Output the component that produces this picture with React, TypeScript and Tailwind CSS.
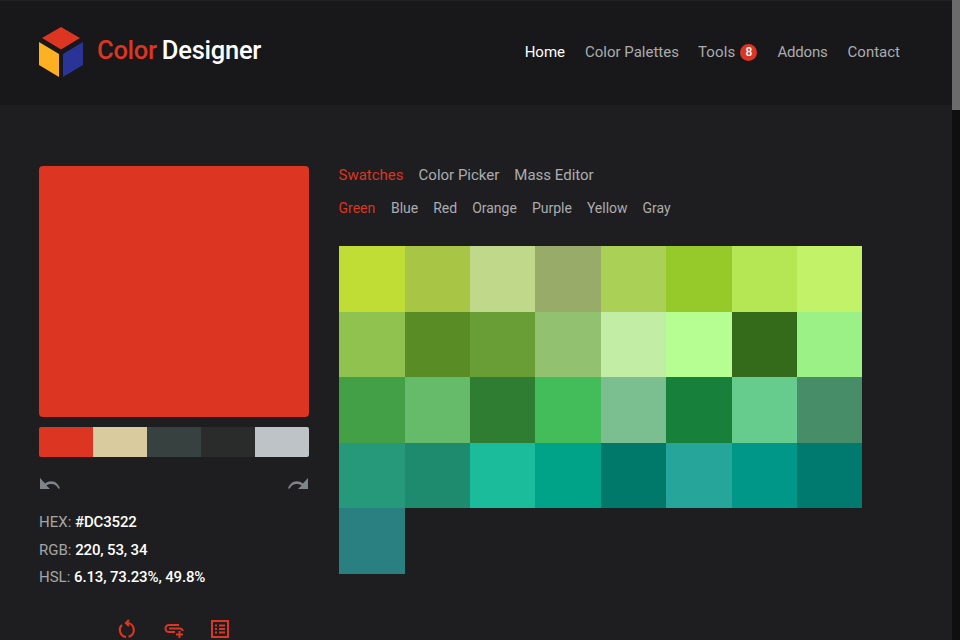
const rows = [
  "#c0dd36","#a8c545","#bfd88a","#98ab68","#aad056","#96ca2b","#b5e654","#c1f268",
  "#90c24f","#5a8c26","#699e37","#92c26f","#c1eda4","#b6fe92","#336b1b","#9bf086",
  "#43a047","#66bb6a","#2e7d32","#43bd59","#7bbf90","#17803a","#66cc8e","#478d68",
  "#26997a","#1e8a6e","#1abc9c","#00a388","#00796b","#26a69a","#009688","#00796e",
  "#2a8080",
];
const history = ["#dc3522", "#d9cb9e", "#374140", "#2a2c2b", "#bdc3c7"];

function Logo() {
  return (
    <svg width="44" height="50" viewBox="0 0 44 50" className="shrink-0">
      <polygon points="22,0 41,11 22,22.500 3,11" fill="#dc3522" />
      <polygon points="0,15 20,27 20,50 0,38" fill="#fdb022" />
      <polygon points="24,27 44,15 44,38 24,50" fill="#2a3496" />
    </svg>
  );
}

export default function App() {
  return (
    <div className="flex h-[640px] w-[960px] overflow-hidden bg-[#1e1e20] font-['Roboto',sans-serif]">
      <div className="flex-1 min-w-0">
        <header className="flex h-[105px] items-start justify-between border-t border-[#222224] bg-[#18181a] pl-[39px] pr-[52px]">
          <div className="mt-[26px] flex items-center gap-[14px]">
            <Logo />
            <div className="mt-[-4px] text-[25.500px] font-medium leading-[30px] tracking-[-0.25px]">
              <span className="text-[#dc3522]">Color</span>
              <span className="ml-[5px] text-white">Designer</span>
            </div>
          </div>
          <nav className="mt-[39px] flex items-center gap-5 text-[15px] leading-[24px] text-[#aaacb0]">
            <a className="text-white">Home</a>
            <a className="mr-[-1px]">Color Palettes</a>
            <a className="flex items-center gap-[5px] tracking-[0.15px]">
              Tools
              <span className="flex h-[17px] w-[17px] items-center justify-center rounded-full bg-[#dc3522] text-[12px] font-medium text-white">8</span>
            </a>
            <a className="tracking-[-0.2px]">Addons</a>
            <a>Contact</a>
          </nav>
        </header>
        <main className="flex gap-[30px] pl-[39px] pt-[60px]">
          <aside className="mt-px w-[269.500px] shrink-0">
            <div className="h-[251px] rounded bg-[#dc3522]" />
            <div className="mt-[10px] flex h-[30px] overflow-hidden rounded-[2px]">
              {history.map((c) => (
                <div key={c} className="flex-1" style={{ backgroundColor: c }} />
              ))}
            </div>
            <div className="mt-[20px] flex justify-between text-[#7f8488]">
              <svg width="21" height="14" viewBox="0 0 21 14" fill="currentColor">
                <path d="M1 1v11h10l-3.600-3.600C9 7.300 10.800 7 12.500 7c3 0 5.600 1.700 6.800 4.800l1.700-.6C19.400 7 16.200 4.200 12.500 4.200c-2.500 0-4.600.8-6.400 2.300L1 1z" />
              </svg>
              <svg width="21" height="14" viewBox="0 0 21 14" fill="currentColor">
                <path d="M20 1v11H10l3.600-3.600C12 7.300 10.200 7 8.500 7c-3 0-5.600 1.700-6.800 4.800L0 11.200C1.600 7 4.800 4.200 8.500 4.200c2.500 0 4.600.8 6.400 2.300L20 1z" />
              </svg>
            </div>
            <div className="mt-[18px] text-[15px] leading-[27.500px] text-[#a4a6aa]">
              <div>HEX: <span className="font-medium tracking-[-0.15px] text-white">#DC3522</span></div>
              <div>RGB: <span className="font-medium tracking-[-0.15px] text-white">220, 53, 34</span></div>
              <div>HSL: <span className="font-medium tracking-[-0.15px] text-white">6.13, 73.23%, 49.8%</span></div>
            </div>
            <div className="mt-[27px] flex pl-[78px] text-[#dc3522]">
              <svg width="20" height="20" viewBox="0 0 20 20" fill="none" stroke="currentColor" strokeWidth="2.200">
                <path d="M10 4a7 7 0 0 1 1.500 13.800" />
                <path d="M9 18A7 7 0 0 1 5 6" />
                <path d="M12 1 9 4l3 3" />
              </svg>
              <svg className="ml-[26px] mt-[3px]" width="22" height="20" viewBox="0 0 22 20" fill="none" stroke="currentColor" strokeWidth="2">
                <path d="M16 3H6a3.500 3.500 0 0 0 0 7h6" />
                <path d="M6 6.500h11.500A3.500 3.500 0 0 1 20 9" />
                <path d="M16.500 9v7M13 12.500h7" />
              </svg>
              <svg className="ml-[25px]" width="20" height="20" viewBox="0 0 20 20" fill="none" stroke="currentColor" strokeWidth="2">
                <rect x="2" y="2" width="16" height="16" />
                <path d="M9 6.500h6M9 10h6M9 13.500h6M5 6.500h2M5 10h2M5 13.500h2" />
              </svg>
            </div>
          </aside>
          <section className="flex-1 min-w-0">
            <div className="flex gap-[15px] text-[15px] leading-[20px] text-[#aaacb0]">
              <a className="text-[#dc3522]">Swatches</a>
              <a>Color Picker</a>
              <a>Mass Editor</a>
            </div>
            <div className="mt-[13px] flex gap-[15px] text-[14px] leading-[20px] text-[#aaacb0]">
              <a className="mr-[0.7px] text-[#dc3522]">Green</a>
              <a>Blue</a>
              <a>Red</a>
              <a>Orange</a>
              <a>Purple</a>
              <a>Yellow</a>
              <a>Gray</a>
            </div>
            <div className="ml-[0.7px] mt-[28px] grid w-[523.200px] grid-cols-8">
              {rows.map((c, i) => (
                <div key={i} className="h-[65.500px]" style={{ backgroundColor: c }} />
              ))}
            </div>
          </section>
        </main>
      </div>
      <div className="flex w-2 shrink-0 flex-col bg-[#0f0f0f]">
        <div className="h-[110px] bg-[#6b6b6b]" />
      </div>
    </div>
  );
}
